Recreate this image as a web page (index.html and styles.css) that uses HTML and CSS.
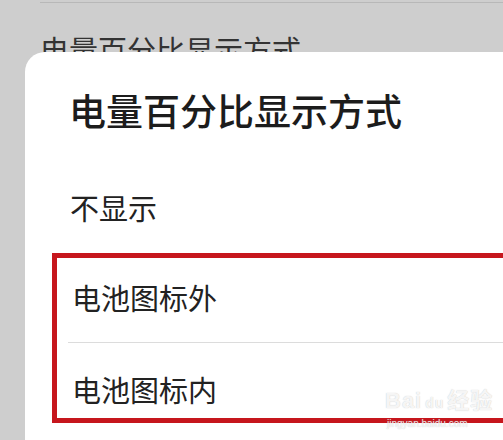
FILE: index.html
```html
<!DOCTYPE html>
<html lang="zh">
<head>
  <meta charset="UTF-8" />
  <title>电量百分比显示方式</title>
  <link rel="stylesheet" href="styles.css">
</head>
<body>

  <!-- Fondo: pantalla de ajustes -->
  <div class="behind">
    <div class="behind-line"></div>
    <div class="behind-title">电量百分比显示方式</div>
  </div>

  <!-- Hoja de opciones -->
  <div class="sheet">
    <h1 class="sheet-title">电量百分比显示方式</h1>
    <div class="option first">不显示</div>
    <div class="marked">
      <div class="option">电池图标外</div>
      <div class="divider"></div>
      <div class="option last">电池图标内</div>
    </div>
  </div>

  <div class="watermark">
    <div class="wm-logo">Bai<span class="wm-du">du</span>经验</div>
    <div class="wm-url">jingyan.baidu.com</div>
  </div>

</body>
</html>
```

FILE: styles.css
```css
body {
  margin: 0;
  width: 503px;
  height: 440px;
  overflow: hidden;
  position: relative;
  background: #cecece;
  color: #222;
  font-family: "Noto Sans CJK SC", "Noto Sans", sans-serif;
}

.behind {
  height: 52px;
  overflow: hidden;
}

.behind-line {
  height: 1px;
  margin: 2px 0 0 40px;
  background: #b8b8b8;
}

.behind-title {
  margin: 26px 0 0 40px;
  font-size: 29px;
  line-height: 40px;
  color: #333;
}

.sheet {
  margin-left: 25px;
  height: 388px;
  background: #fff;
  border-radius: 20px 0 0 0;
  padding-top: 1px;
  box-sizing: border-box;
}

.sheet-title {
  margin: 35px 0 0 44px;
  font-size: 37px;
  line-height: 44px;
  font-weight: 500;
  color: #1c1c1c;
}

.option {
  font-size: 29px;
  line-height: 40px;
  color: #222;
}

.option.first {
  margin: 55px 0 0 45px;
}

.marked {
  margin: 26px 0 0 27px;
  border: 5px solid #c6161d;
  border-right: none;
  padding: 19px 0 0 15px;
  height: 141px;
}

.divider {
  height: 1px;
  background: #dcdcdc;
  margin: 25px 0 0 -4px;
}

.option.last {
  margin-top: 26px;
}

.watermark {
  position: absolute;
  left: 385px;
  top: 388px;
  color: rgba(255, 255, 255, 0.85);
  text-shadow: 0 0 1px rgba(150, 150, 150, 0.6);
  font-family: "Liberation Sans", "Noto Sans CJK SC", sans-serif;
}

.wm-logo {
  font-size: 22px;
  line-height: 26px;
  font-weight: bold;
  letter-spacing: 1px;
}

.wm-du {
  font-size: 14px;
  margin: 0 3px;
}

.wm-url {
  font-size: 10px;
  line-height: 12px;
  margin: 2px 0 0 2px;
}
```
